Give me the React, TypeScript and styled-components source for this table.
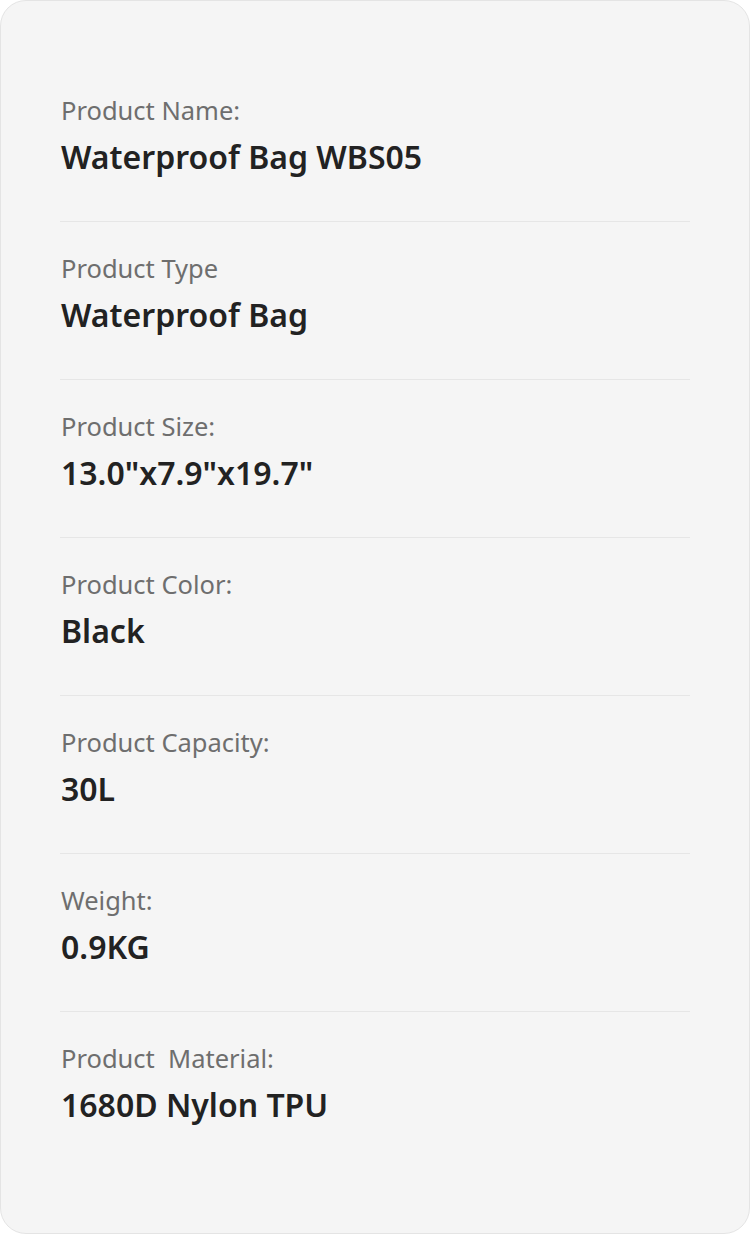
import styled, { createGlobalStyle } from "styled-components";

const GlobalStyle = createGlobalStyle`
  html, body {
    margin: 0;
    padding: 0;
    background: #ffffff;
  }
  * {
    box-sizing: border-box;
  }
`;

const Card = styled.div`
  width: 750px;
  height: 1234px;
  background-color: #f5f5f5;
  border: 1px solid #e4e4e4;
  border-radius: 26px;
  padding: 63px 59px 0;
  font-family: "Noto Sans", "Open Sans", sans-serif;
`;

const Row = styled.div`
  display: flex;
  flex-direction: column;
  padding: 30px 1px 44px;
  border-bottom: 1px solid #e6e6e6;

  &:last-child {
    border-bottom: none;
  }
`;

const Label = styled.div`
  font-size: 25.5px;
  line-height: 32px;
  color: #6e6e6e;
  font-weight: 400;
`;

const Value = styled.div`
  margin-top: 11px;
  font-size: 32px;
  line-height: 40px;
  color: #222222;
  font-weight: 600;
`;

const specs = [
  { label: "Product Name:", value: "Waterproof Bag WBS05" },
  { label: "Product Type", value: "Waterproof Bag" },
  { label: "Product Size:", value: '13.0"x7.9"x19.7"' },
  { label: "Product Color:", value: "Black" },
  { label: "Product Capacity:", value: "30L" },
  { label: "Weight:", value: "0.9KG" },
  { label: "Product\u00a0 Material:", value: "1680D Nylon TPU" },
];

export default function App() {
  return (
    <>
      <GlobalStyle />
      <Card>
        {specs.map((spec) => (
          <Row key={spec.label}>
            <Label>{spec.label}</Label>
            <Value>{spec.value}</Value>
          </Row>
        ))}
      </Card>
    </>
  );
}
